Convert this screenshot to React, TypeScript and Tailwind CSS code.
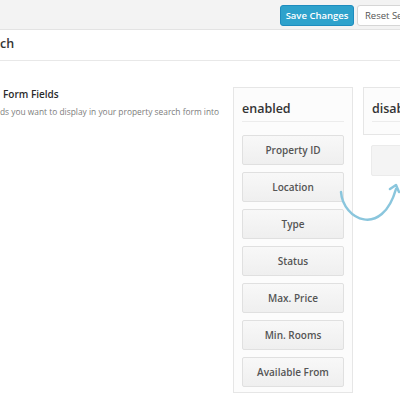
import React from "react";

const items = ["Property ID", "Location", "Type", "Status", "Max. Price", "Min. Rooms", "Available From"];

export default function App() {
  return (
    <div
      className="relative w-[400px] h-[400px] overflow-hidden bg-white"
      style={{ fontFamily: '"Open Sans", "Noto Sans", sans-serif' }}
    >
      {/* top bar */}
      <div className="h-[30px] bg-[#f3f3f3] border-b border-[#e3e3e3] flex items-start pt-[5px] pl-[280px] gap-[3px]">
        <button className="shrink-0 h-[21px] w-[74px] rounded-[3px] bg-[#2ea2cc] border border-[#1e8cbe] text-white text-[9.5px] leading-[19px] font-semibold whitespace-nowrap">
          Save Changes
        </button>
        <button className="shrink-0 h-[21px] px-[7px] rounded-[3px] bg-white border border-[#d6d6d6] text-[#555] text-[9.5px] leading-[19px] whitespace-nowrap">
          Reset Section
        </button>
      </div>

      {/* heading */}
      <div className="h-[31px] border-b border-[#e8e8e8] flex items-center">
        <span className="text-[12.5px] font-semibold text-[#333] leading-[20px] -mt-[2px]">ch</span>
      </div>

      {/* content */}
      <div className="flex items-start pt-[24px]">
        <div className="w-[233px] shrink-0 whitespace-nowrap overflow-hidden">
          <div className="pl-[3px] text-[10px] leading-[18px] font-semibold text-[#2a2a2a]">Form Fields</div>
          <div className="mt-[1px] text-[8.4px] leading-[16px] text-[#7d7d7d]">
            ds you want to display in your property search form into
          </div>
        </div>

        {/* enabled */}
        <div className="mt-[2px] w-[120px] shrink-0 border border-[#e6e6e6] bg-[#fcfcfc] px-[8px] pb-[5px]">
          <div className="pt-[11px] pb-[2px] border-b border-[#ececec]">
            <div className="text-[12.5px] leading-[20px] font-semibold text-[#333]">enabled</div>
          </div>
          <div className="mt-[13px] flex flex-col gap-[7px]">
            {items.map((it) => (
              <div
                key={it}
                className="h-[30px] flex items-center justify-center rounded-[2px] border border-[#e0e0e0] bg-gradient-to-b from-[#f8f8f8] to-[#efefef] text-[10px] font-semibold text-[#555] whitespace-nowrap"
              >
                {it}
              </div>
            ))}
          </div>
        </div>

        {/* disabled */}
        <div className="mt-[2px] ml-[10px] w-[120px] shrink-0">
          <div className="border border-[#e6e6e6] bg-[#fcfcfc] px-[8px] pb-[12px]">
            <div className="pt-[11px] pb-[2px] border-b border-[#ececec]">
              <div className="text-[12.5px] leading-[20px] font-semibold text-[#333]">disabled</div>
            </div>
          </div>
          <div className="mt-[10px] ml-[8px] w-[102px] h-[31px] rounded-[2px] border border-[#ebebeb] bg-[#f4f4f4]" />
        </div>
      </div>

      {/* arrow */}
      <svg className="absolute left-0 top-0 pointer-events-none" width="400" height="400" viewBox="0 0 400 400" fill="none">
        <path d="M341 192 C 343 220, 382 238, 396 189" stroke="#8ac6dd" strokeWidth="2.5" strokeLinecap="round" />
        <path d="M390 189 L396 185 L399 192" stroke="#8ac6dd" strokeWidth="2.5" strokeLinecap="round" strokeLinejoin="round" />
      </svg>
    </div>
  );
}
